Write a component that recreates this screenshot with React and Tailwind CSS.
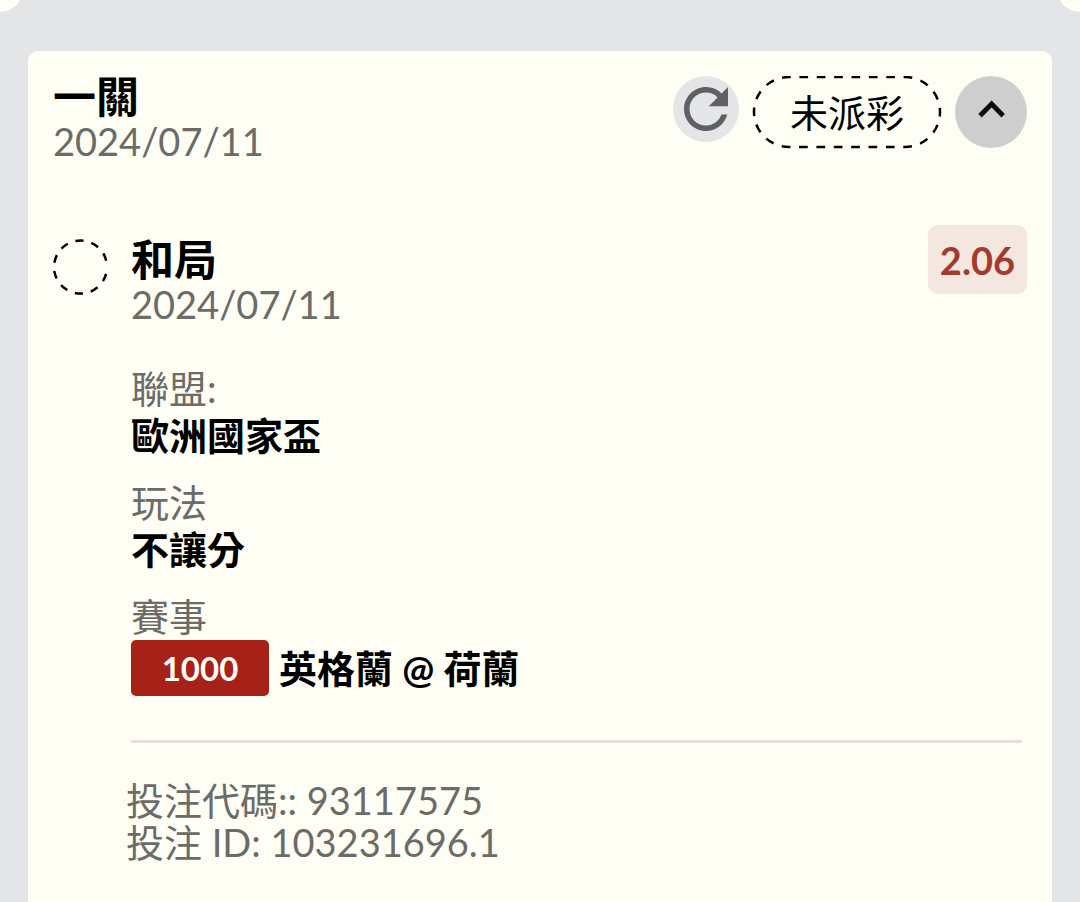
import { MdRefresh } from "react-icons/md";

function PillOutline() {
  return (
    <svg className="absolute inset-0 h-full w-full" fill="none" aria-hidden="true">
      <rect
        x="2"
        y="1"
        rx="35"
        className="h-[calc(100%-3px)] w-[calc(100%-4px)]"
        pathLength="26"
        stroke="#000"
        strokeWidth="2.5"
        strokeDasharray="0.5 0.5"
        strokeDashoffset="0.4"
      />
    </svg>
  );
}

function PendingMark() {
  return (
    <svg className="h-14 w-14" viewBox="0 0 56 56" fill="none" role="img" aria-label="未派彩">
      <path
        d="M53.1 34.9A26.5 26.5 0 1 1 53.3 22"
        pathLength="332"
        stroke="#000"
        strokeWidth="2.5"
        strokeDasharray="17.4 17.5"
      />
    </svg>
  );
}

function Detail({ label, children }) {
  return (
    <div>
      <dt className="text-[#6b6b67]">{label}</dt>
      <dd className="flex items-center gap-[10px] font-bold">{children}</dd>
    </div>
  );
}

export default function App() {
  return (
    <div className="relative flex min-h-screen flex-col overflow-hidden bg-[#e4e5e7] px-7 pt-[51px] font-[Lato,'Noto_Sans_CJK_TC',sans-serif] text-[38px] leading-[47px] text-black">
      <span className="absolute -left-[23px] -top-[34px] size-[46px] rounded-full bg-[#fefef5]" />
      <span className="absolute -right-[23px] -top-[34px] size-[46px] rounded-full bg-[#fefef5]" />
      <main className="flex-1 rounded-t-[10px] bg-[#fefef5] px-[25px] pt-[25px]">
        <header className="flex items-start justify-between">
          <div className="-mt-[2px]">
            <h1 className="text-[43px] font-bold leading-[45px]">一關</h1>
            <time className="block leading-[45px] text-[#6b6b67]">2024/07/11</time>
          </div>
          <div className="flex items-start gap-[13px]">
            <button type="button" aria-label="重新整理" className="size-[66px] rounded-full bg-[#e4e5e7] text-[#5f6061]">
              <MdRefresh className="size-[66px]" />
            </button>
            <span className="relative flex h-[73px] w-[190px] items-center justify-center">
              <PillOutline />
              未派彩
            </span>
            <button type="button" aria-label="收合" className="size-[72px] rounded-full bg-[#cecece]">
              <svg className="size-[72px]" viewBox="0 0 72 72" fill="none" aria-hidden="true">
                <path d="M25 39.8 36.6 28 48.2 39.8" stroke="#0c0c0c" strokeWidth="4.8" />
              </svg>
            </button>
          </div>
        </header>

        <section className="mt-[61px] flex items-start">
          <div className="mt-[14px] mr-[22px] shrink-0">
            <PendingMark />
          </div>
          <div className="flex-1">
            <div className="flex items-start justify-between">
              <div className="mt-3">
                <h2 className="text-[43px] font-bold leading-[45px]">和局</h2>
                <time className="block leading-[45px] text-[#6b6b67]">2024/07/11</time>
              </div>
              <strong className="flex h-[69px] items-center rounded-[10px] bg-[#f4e7e0] px-3 pt-[2px] font-bold text-[#a5392b]">
                2.06
              </strong>
            </div>

            <dl className="mt-[38px] flex flex-col gap-5">
              <Detail label="聯盟:">歐洲國家盃</Detail>
              <Detail label="玩法">不讓分</Detail>
              <Detail label="賽事">
                <span className="flex h-14 w-[138px] items-center justify-center rounded-[5px] bg-[#a62117] text-[33px] font-bold text-[#fefef5]">
                  1000
                </span>
                英格蘭 @ 荷蘭
              </Detail>
            </dl>

            <hr className="mt-11 mr-[5px] border-t-[3px] border-[#e1e1da]" />

            <div className="-ml-[5px] mt-9 leading-[42px] text-[#6b6b67]">
              <p>投注代碼:: 93117575</p>
              <p>投注 ID: 103231696.1</p>
            </div>
          </div>
        </section>
      </main>
    </div>
  );
}
